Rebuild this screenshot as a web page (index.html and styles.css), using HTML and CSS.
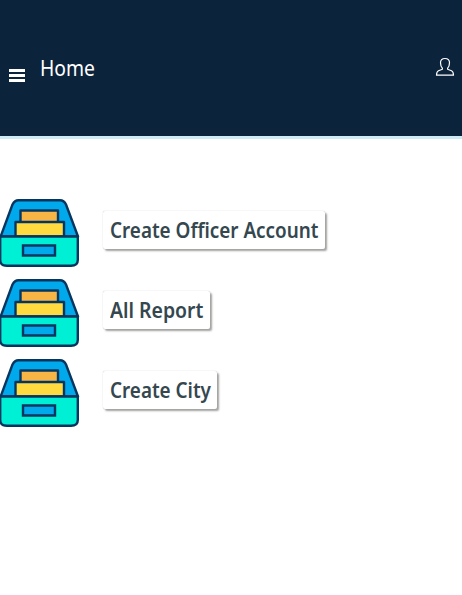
FILE: index.html
```html
<!DOCTYPE html>
<html lang="en">
<head>
<meta charset="utf-8">
<title>Home</title>
<link rel="stylesheet" href="styles.css">
</head>
<body>
<svg class="defs" width="0" height="0" aria-hidden="true">
  <symbol id="drawer" viewBox="0 0 80 80">
    <g stroke="#06365f" stroke-width="2.4" stroke-linejoin="round">
      <path fill="#00a8ec" d="M.6 46.500 12.500 14.500Q14.600 10.200 18.500 10.200H60Q64 10.200 66 14.500L78 46.500Z"/>
      <path fill="#f6b545" d="M20.500 20.500H58V32.500H20.500Z"/>
      <path fill="#ffdb40" d="M15.500 32H64V46.500H15.500Z"/>
      <path fill="#00f0d5" d="M.2 46.500H77.800V70Q77.800 75.800 71 75.800H7Q.2 75.800 .2 70Z"/>
      <path fill="#00a8ec" d="M23 55.500H55V65.500H23Z" stroke-linejoin="miter"/>
    </g>
  </symbol>
</svg>
<header class="topbar">
  <button class="menu" aria-label="Menu"><span></span><span></span><span></span></button>
  <h1 class="title"><span class="label">Home</span></h1>
  <svg class="user" viewBox="0 0 20 20" width="20" height="20"><path d="M7.400 11.200C5.900 9.900 5.500 7.900 5.500 5.800C5.500 3 7.300 1.500 10 1.500S14.500 3 14.500 5.800C14.500 7.900 14.100 9.900 12.600 11.200V12.200L16.500 13.700Q18.400 14.500 18.500 18.200H1.500Q1.600 14.500 3.500 13.700L7.400 12.200Z"/></svg>
</header>
<main class="list">
  <div class="row"><svg class="icon"><use href="#drawer"/></svg><a class="card officer"><span class="label">Create Officer Account</span></a></div>
  <div class="row"><svg class="icon"><use href="#drawer"/></svg><a class="card report"><span class="label">All Report</span></a></div>
  <div class="row"><svg class="icon"><use href="#drawer"/></svg><a class="card city"><span class="label">Create City</span></a></div>
</main>
</body>
</html>
```
FILE: styles.css
```css
* { box-sizing: border-box; }
body { margin: 0; background: #fff; font-family: "Noto Sans", sans-serif; overflow: hidden; }
.defs { display: none; }
.topbar { display: flex; align-items: flex-start; height: 139px; padding: 55px 7px 0 9px; background: #0b233b; border-bottom: 3px solid #cdebf4; }
.menu { display: flex; flex-direction: column; gap: 2px; width: 16px; margin: 14px 0 0; padding: 0; border: 0; background: none; }
.menu span { height: 3px; background: #fff; }
.title { flex: 1; margin: -1px 0 0 15px; color: #fff; font-size: 21px; font-weight: 450; line-height: 28px; }
.title .label { transform: scaleX(.92); }
.user { margin-top: 2px; fill: none; stroke: #fff; stroke-width: 1.2; stroke-linejoin: round; }
.label { display: inline-block; transform-origin: left center; white-space: nowrap; }
.list { padding-top: 54px; }
.row { display: flex; align-items: flex-start; height: 80px; }
.icon { width: 80px; height: 80px; margin-top: -3px; }
.card { height: 38px; margin: 18px 0 0 23px; padding: 0 0 0 6.500px; border-radius: 2px; background: #fff; box-shadow: 0 0 1px #aaa, 2px 2px 2px #a2a2a0; color: #35474f; font-size: 21px; font-weight: 600; line-height: 39px; }
.card .label { transform: scaleX(.899); }
.officer { width: 222px; }
.report { width: 107px; }
.report .label { transform: scaleX(.925); }
.city { width: 114px; }
```
